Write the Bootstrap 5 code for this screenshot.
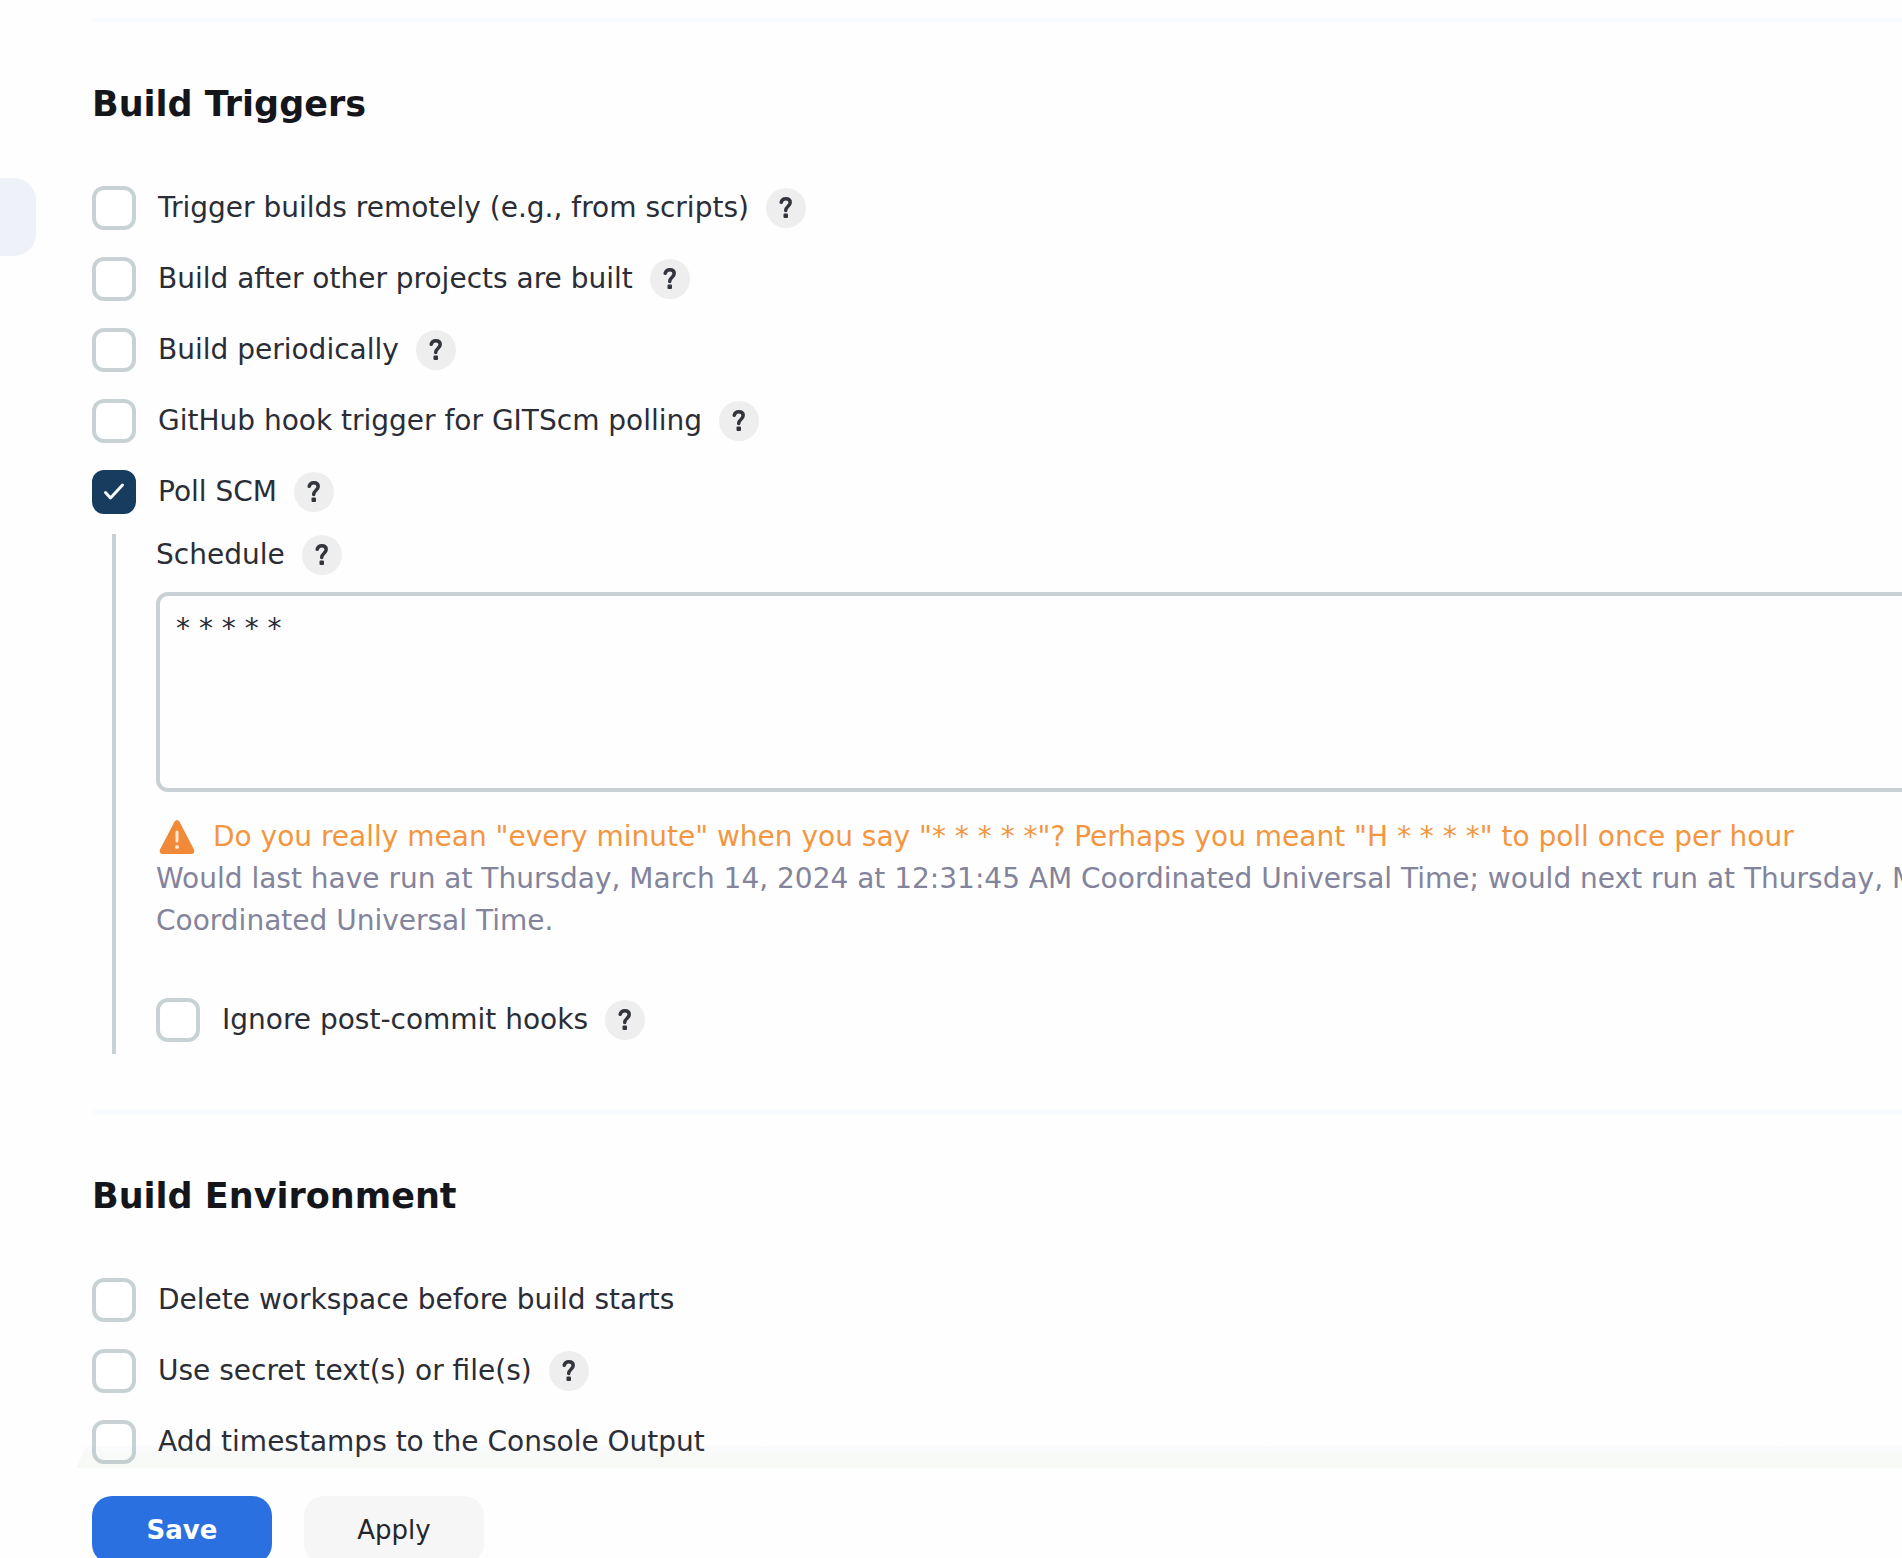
<!DOCTYPE html>
<html lang="en">
<head>
<meta charset="utf-8">
<meta name="viewport" content="width=device-width, initial-scale=1">
<title>Build configuration</title>
<link href="https://cdn.jsdelivr.net/npm/bootstrap@5.3.0/dist/css/bootstrap.min.css" rel="stylesheet">
<style>
  body { font-family: "DejaVu Sans", sans-serif; font-size: 28px; line-height: 42px; color: #2b2d36; background: #fefefe; }
  .side-rail { width: 36px; padding-top: 178px; }
  .side-active { height: 78px; background: #eef1f7; border-radius: 0 22px 22px 0; }
  .config-main { padding: 18px 0 0 56px; margin-right: -500px; min-width: 0; }
  .section-rule { height: 4px; margin: 0; border: 0; background: #f8fbff; opacity: 1; }
  .section-title { font-size: 35px; line-height: 42px; font-weight: 700; color: #14161c; margin: 61px 0; }
  .option-list { display: flex; flex-direction: column; gap: 27px; }
  .option-row { display: flex; align-items: center; height: 44px; }
  .option-row .form-check-input { width: 44px; height: 44px; margin: 0 22px 0 0; flex: none; border: 4px solid #c8d2d5; border-radius: 12px; background-color: #fff; }
  .option-row .form-check-input:checked { border-color: #173c5e; background-color: #173c5e; background-size: 34px 34px;
    background-image: url("data:image/svg+xml,%3Csvg xmlns='http://www.w3.org/2000/svg' viewBox='0 0 34 34'%3E%3Cpath d='M8.5 17.5l5 5.5 12-13' fill='none' stroke='%23f4f6f8' stroke-width='3' stroke-linecap='round' stroke-linejoin='round'/%3E%3C/svg%3E"); }
  .help-btn { width: 40px; height: 40px; flex: none; margin-left: 17px; padding: 0; border: 0; border-radius: 50%; background: #eee; color: #33353d; display: flex; align-items: center; justify-content: center; }
  .nested { margin: 20px 0 56px 20px; padding: 0 0 12px 40px; border-left: 4px solid #c8d2d5; }
  .schedule-box { height: 200px; padding: 12px 16px; border: 4px solid #c8d2d5; border-radius: 12px; font-size: 28px; line-height: 42px; color: #2b2d36; background: #fefefe; resize: none; }
  .warn-line { color: #f3963f; margin-top: 24px; }
  .warn-icon { margin: 0 18px 0 3px; }
  .run-info { color: #83849b; margin-bottom: 56px; }
  .action-bar { position: absolute; left: 76px; right: 0; bottom: 0; height: 90px; padding: 28px 0 0 16px; gap: 32px; background: #fefefe; }
  .action-bar::before { content: ""; position: absolute; left: 0; right: 0; top: -22px; height: 22px; background: linear-gradient(rgba(120,180,255,.04), rgba(100,150,70,.045) 50%); clip-path: polygon(10px 0, 100% 0, 100% 100%, 0 100%); }
  .action-bar .btn { width: 180px; height: 68px; flex: none; border: 0; border-radius: 20px; font-size: 26px; line-height: 42px; }
  .btn-save { background: #2a70e0; color: #fff; font-weight: 700; }
  .btn-apply { background: #f6f6f6; color: #24262e; }
</style>
</head>
<body>
<svg class="d-none" aria-hidden="true">
  <symbol id="q" viewBox="0 0 40 40"><path d="M15.200 14.300c.6-2.300 2.200-3.500 4.600-3.500 2.700 0 4.400 1.500 4.400 3.800 0 3.700-4.500 3.600-4.500 8" fill="none" stroke="currentColor" stroke-width="3.500" stroke-linecap="round"/><rect x="17.500" y="25.500" width="4.500" height="4.500" rx="1" fill="currentColor"/></symbol>
</svg>
<div class="d-flex vh-100 overflow-hidden position-relative">
  <aside class="side-rail flex-shrink-0"><div class="side-active"></div></aside>
  <main class="config-main flex-grow-1">
    <section>
      <hr class="section-rule">
      <h2 class="section-title">Build Triggers</h2>
      <div class="option-list">
        <div class="option-row"><input class="form-check-input" type="checkbox" id="o1"><label for="o1">Trigger builds remotely (e.g., from scripts)</label><button type="button" class="help-btn" aria-label="Help"><svg width="40" height="40"><use href="#q"/></svg></button></div>
        <div class="option-row"><input class="form-check-input" type="checkbox" id="o2"><label for="o2">Build after other projects are built</label><button type="button" class="help-btn" aria-label="Help"><svg width="40" height="40"><use href="#q"/></svg></button></div>
        <div class="option-row"><input class="form-check-input" type="checkbox" id="o3"><label for="o3">Build periodically</label><button type="button" class="help-btn" aria-label="Help"><svg width="40" height="40"><use href="#q"/></svg></button></div>
        <div class="option-row"><input class="form-check-input" type="checkbox" id="o4"><label for="o4">GitHub hook trigger for GITScm polling</label><button type="button" class="help-btn" aria-label="Help"><svg width="40" height="40"><use href="#q"/></svg></button></div>
        <div class="option-row"><input class="form-check-input" type="checkbox" id="o5" checked><label for="o5">Poll SCM</label><button type="button" class="help-btn" aria-label="Help"><svg width="40" height="40"><use href="#q"/></svg></button></div>
      </div>
      <div class="nested">
        <div class="d-flex align-items-center"><label for="sched">Schedule</label><button type="button" class="help-btn" aria-label="Help"><svg width="40" height="40"><use href="#q"/></svg></button></div>
        <textarea class="form-control schedule-box mt-3" id="sched">* * * * *</textarea>
        <div class="warn-line d-flex align-items-center">
          <svg class="warn-icon flex-shrink-0" width="36" height="34" viewBox="0 0 36 34" aria-hidden="true"><path d="M15.6 1.6Q18-1.6 20.4 1.6L35 29.500Q36 34 32.500 34H3.500Q0 34 1 29.500z" fill="#f08a38"/><path d="M18 12v9" stroke="#fde6d2" stroke-width="3" stroke-linecap="round"/><circle cx="18" cy="27" r="2" fill="#fde6d2"/></svg>
          <span>Do you really mean "every minute" when you say "* * * * *"? Perhaps you meant "H * * * *" to poll once per hour</span>
        </div>
        <div class="run-info">Would last have run at Thursday, March 14, 2024 at 12:31:45 AM Coordinated Universal Time; would next run at Thursday, March 14, 2024 at 12:31:45 AM Coordinated Universal Time.</div>
        <div class="option-row"><input class="form-check-input" type="checkbox" id="o6"><label for="o6">Ignore post-commit hooks</label><button type="button" class="help-btn" aria-label="Help"><svg width="40" height="40"><use href="#q"/></svg></button></div>
      </div>
    </section>
    <section>
      <hr class="section-rule">
      <h2 class="section-title">Build Environment</h2>
      <div class="option-list">
        <div class="option-row"><input class="form-check-input" type="checkbox" id="o7"><label for="o7">Delete workspace before build starts</label></div>
        <div class="option-row"><input class="form-check-input" type="checkbox" id="o8"><label for="o8">Use secret text(s) or file(s)</label><button type="button" class="help-btn" aria-label="Help"><svg width="40" height="40"><use href="#q"/></svg></button></div>
        <div class="option-row"><input class="form-check-input" type="checkbox" id="o9"><label for="o9">Add timestamps to the Console Output</label></div>
      </div>
    </section>
  </main>
  <div class="action-bar d-flex">
    <button type="submit" class="btn btn-save">Save</button>
    <button type="button" class="btn btn-apply">Apply</button>
  </div>
</div>
<script src="https://cdn.jsdelivr.net/npm/bootstrap@5.3.0/dist/js/bootstrap.bundle.min.js"></script>
</body>
</html>
